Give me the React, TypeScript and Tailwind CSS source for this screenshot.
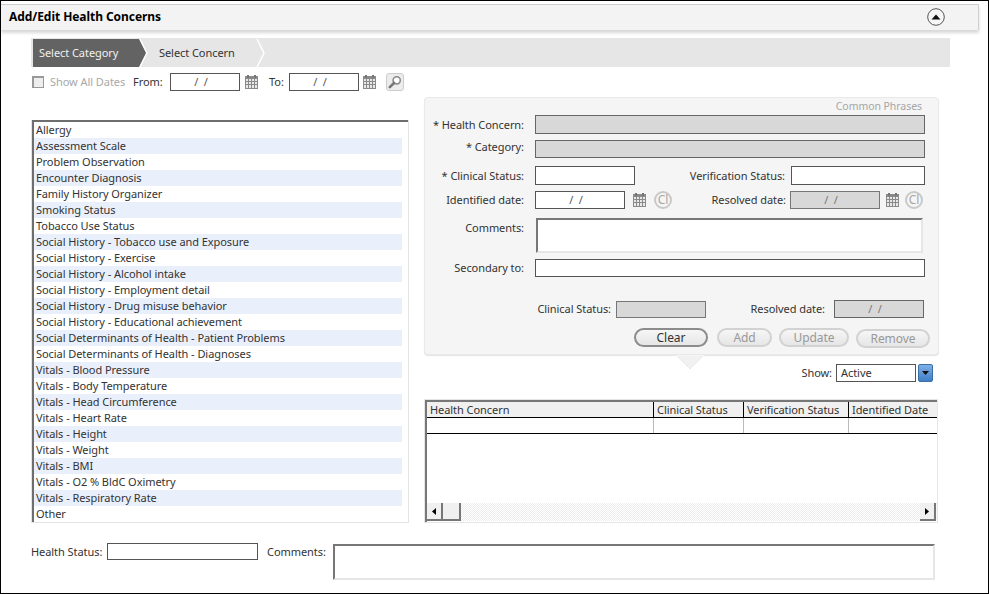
import React from "react";

const categories = [
  "Allergy",
  "Assessment Scale",
  "Problem Observation",
  "Encounter Diagnosis",
  "Family History Organizer",
  "Smoking Status",
  "Tobacco Use Status",
  "Social History - Tobacco use and Exposure",
  "Social History - Exercise",
  "Social History - Alcohol intake",
  "Social History - Employment detail",
  "Social History - Drug misuse behavior",
  "Social History - Educational achievement",
  "Social Determinants of Health - Patient Problems",
  "Social Determinants of Health - Diagnoses",
  "Vitals - Blood Pressure",
  "Vitals - Body Temperature",
  "Vitals - Head Circumference",
  "Vitals - Heart Rate",
  "Vitals - Height",
  "Vitals - Weight",
  "Vitals - BMI",
  "Vitals - O2 % BldC Oximetry",
  "Vitals - Respiratory Rate",
  "Other",
];

function CalendarIcon({ className }: { className?: string }) {
  return (
    <svg width="13" height="14" viewBox="0 0 13 14" className={className}>
      <rect x="0" y="1" width="13" height="13" fill="#8a8a8a" />
      <rect x="2" y="0" width="2" height="3" fill="#777" />
      <rect x="9" y="0" width="2" height="3" fill="#777" />
      <rect x="1" y="4" width="11" height="9" fill="#e8e8e8" />
      <path d="M3.5 4v9M6.5 4v9M9.5 4v9M1 6.5h11M1 9.5h11" stroke="#8a8a8a" strokeWidth="1" />
    </svg>
  );
}

function ClearDate({ className }: { className?: string }) {
  return (
    <div className={`w-[18px] h-[18px] shrink-0 rounded-full border-2 border-[#c9c9c9] flex items-center justify-center text-[12px] leading-none text-[#a6a6a6] ${className ?? ""}`}>
      Cl
    </div>
  );
}

function DateValue({ disabled }: { disabled?: boolean }) {
  return <span className={`whitespace-pre pr-[8px] ${disabled ? "text-[#777]" : "text-[#555]"}`}>{"/  /"}</span>;
}

function Pill({ label, disabled, className }: { label: string; disabled?: boolean; className: string }) {
  return (
    <button
      className={`h-[19px] rounded-full border-2 bg-gradient-to-b from-[#f6f6f6] to-[#e6e6e6] text-[12px] leading-none flex items-center justify-center ${
        disabled ? "border-[#d2d2d2] text-[#999]" : "border-[#8c8c8c] text-[#333]"
      } ${className}`}
    >
      {label}
    </button>
  );
}

function FormLabel({ children, className }: { children: React.ReactNode; className: string }) {
  return <label className={`text-right text-[#333] shrink-0 ${className}`}>{children}</label>;
}

export default function App() {
  return (
    <div className="w-[989px] h-[594px] overflow-hidden bg-white border-t border-l border-r border-b border-black flex flex-col text-[11px] leading-4 tracking-[-0.06px] text-[#333] font-['Noto_Sans','Open_Sans',sans-serif]">
      {/* title bar */}
      <div className="mt-[3px] w-[978px] h-[26px] shrink-0 bg-[#f3f3f3] border-t border-[#cfcfcf] border-r flex items-center justify-between pl-2 pr-[33px] pb-[2px] shadow-[0_3px_3px_#d8d8d8]">
        <h1 className="text-[12px] font-bold text-black">Add/Edit Health Concerns</h1>
        <svg width="18" height="18" viewBox="0 0 18 18">
          <circle cx="9" cy="9" r="8.3" fill="#f6f6f6" stroke="#555" strokeWidth="1" />
          <path d="M4.5 11.5 9 6.5l4.5 5z" fill="#111" />
        </svg>
      </div>

      <div className="pl-[30px] flex flex-col">
        {/* steps */}
        <div className="mt-[8px] w-[919px] h-[29px] bg-[#e6e6e6] pl-[2px] pt-[1px] flex">
          <div className="w-[106px] h-[28px] bg-[#636363] text-[#f0f0f0] pl-[6px] flex items-center">Select Category</div>
          <svg width="9" height="28" viewBox="0 0 9 28" className="shrink-0">
            <path d="M0 0 7 14 0 28z" fill="#636363" />
            <path d="M1 0 8 14 1 28" fill="none" stroke="#fff" strokeWidth="1.2" />
          </svg>
          <div className="w-[108px] h-[28px] pl-[11px] flex items-center">Select Concern</div>
          <svg width="9" height="28" viewBox="0 0 9 28" className="shrink-0">
            <path d="M1 0 8 14 1 28" fill="none" stroke="#fff" strokeWidth="1.5" />
          </svg>
        </div>

        {/* date filter */}
        <div className="mt-[6px] h-[18px] flex items-center">
          <span className="ml-[1px] w-[12px] h-[12px] shrink-0 border border-[#999] border-t-2 border-l-2 bg-[#eee]" />
          <span className="ml-[6px] w-[83px] shrink-0 text-[#a8a8a8]">Show All Dates</span>
          <span className="w-[37px]">From:</span>
          <div className="w-[70px] h-[18px] border border-[#555] text-center">
            <DateValue />
          </div>
          <CalendarIcon className="ml-[5px]" />
          <span className="ml-[11px] w-[20px]">To:</span>
          <div className="w-[70px] h-[18px] border border-[#555] text-center">
            <DateValue />
          </div>
          <CalendarIcon className="ml-[4px]" />
          <div className="ml-[10px] w-[18px] h-[18px] rounded-[3px] border border-[#ccc] bg-[#ececec] flex items-center justify-center">
            <svg width="14" height="14" viewBox="0 0 14 14">
              <circle cx="8.7" cy="5.3" r="3.6" fill="#fff" stroke="#8a8a8a" strokeWidth="1.6" />
              <path d="M6 8 1.8 12.2" stroke="#777" strokeWidth="2.6" strokeLinecap="round" />
            </svg>
          </div>
        </div>

        <div className="mt-[6px] flex">
          {/* category list */}
          <div className="mt-[23px] w-[378px] h-[403px] border-l border-r border-b border-[#e4e4e4] shrink-0">
            <ul className="w-full h-full border-t-2 border-l-2 border-[#6e6e6e] pr-[6px]">
              {categories.map((c, i) => (
                <li key={c} className={`h-4 pl-[2px] ${i % 2 === 1 ? "bg-[#eaf0fb]" : ""}`}>
                  {c}
                </li>
              ))}
            </ul>
          </div>

          <div className="ml-[15px] w-[516px] flex flex-col">
            {/* concern form */}
            <div className="relative h-[258px] w-[515px] bg-[#f5f5f5] border border-[#e9e9e9] rounded-[4px] shadow-[0_1px_1px_#e4e4e4]">
              <div className="h-[17px] pr-[16px] text-right text-[10.5px] text-[#a6a6a6]">Common Phrases</div>

              <div className="flex items-center h-[19px]">
                <FormLabel className="w-[99px]">* Health Concern:</FormLabel>
                <div className="ml-[11px] w-[390px] h-[19px] bg-[#d8d8d8] border border-[#666]" />
              </div>
              <div className="mt-[6px] flex items-center h-[18px]">
                <FormLabel className="w-[99px] pb-[4px]">* Category:</FormLabel>
                <div className="ml-[11px] w-[390px] h-[18px] bg-[#d8d8d8] border border-[#666]" />
              </div>
              <div className="mt-[8px] flex items-center h-[19px]">
                <FormLabel className="w-[99px]">* Clinical Status:</FormLabel>
                <div className="ml-[11px] w-[100px] h-[19px] bg-white border border-[#555]" />
                <FormLabel className="w-[150px]">Verification Status:</FormLabel>
                <div className="ml-[6px] w-[134px] h-[19px] bg-white border border-[#555]" />
              </div>
              <div className="mt-[6px] flex items-center h-[18px]">
                <FormLabel className="w-[99px]">Identified date:</FormLabel>
                <div className="ml-[11px] w-[90px] h-[18px] bg-white border border-[#555] text-center">
                  <DateValue />
                </div>
                <CalendarIcon className="ml-[8px] shrink-0" />
                <ClearDate className="ml-[8px]" />
                <FormLabel className="w-[114px]">Resolved date:</FormLabel>
                <div className="ml-[4px] w-[90px] h-[18px] bg-[#d8d8d8] border border-[#777] text-center">
                  <DateValue disabled />
                </div>
                <CalendarIcon className="ml-[6px] shrink-0" />
                <ClearDate className="ml-[6px]" />
              </div>
              <div className="mt-[9px] flex h-[35px]">
                <FormLabel className="w-[99px] pt-[2px]">Comments:</FormLabel>
                <div className="ml-[12px] w-[387px] h-[35px] bg-white border-2 border-t-[#777] border-l-[#777] border-r-[#e6e6e6] border-b-[#e6e6e6]" />
              </div>
              <div className="mt-[6px] flex items-center h-[18px]">
                <FormLabel className="w-[99px]">Secondary to:</FormLabel>
                <div className="ml-[11px] w-[390px] h-[18px] bg-white border border-[#555]" />
              </div>
              <div className="mt-[23px] flex items-center h-[18px]">
                <FormLabel className="w-[186px]">Clinical Status:</FormLabel>
                <div className="ml-[5px] w-[90px] h-[17px] bg-[#d8d8d8] border border-[#777]" />
                <FormLabel className="w-[119px]">Resolved date:</FormLabel>
                <div className="ml-[9px] w-[90px] h-[18px] bg-[#d8d8d8] border border-[#666] text-center">
                  <DateValue disabled />
                </div>
              </div>
              <div className="mt-[10px] flex items-start">
                <Pill label="Clear" className="ml-[209px] w-[74px]" />
                <Pill label="Add" disabled className="ml-[9px] w-[55px]" />
                <Pill label="Update" disabled className="ml-[7px] w-[70px]" />
                <Pill label="Remove" disabled className="ml-[7px] mt-[1px] w-[74px]" />
              </div>
              {/* callout tip */}
              <svg width="28" height="15" viewBox="0 0 28 15" className="absolute left-[251px] top-[257px]">
                <path d="M0 0 14 14 28 0z" fill="#f1f1f1" stroke="#e9e9e9" strokeWidth="1" />
                <path d="M0 0h28" stroke="#f5f5f5" strokeWidth="2" />
              </svg>
            </div>

            {/* status filter */}
            <div className="mt-[9px] h-[18px] flex items-center justify-end pr-[7px]">
              <span>Show:</span>
              <div className="ml-[4px] w-[80px] h-[18px] border border-[#555] pl-[4px] text-[#333]">Active</div>
              <div className="ml-[2px] w-[15px] h-[18px] rounded-[2px] border border-[#3b6ea8] bg-gradient-to-b from-[#7fb0e6] to-[#3f7fc6] flex items-center justify-center">
                <svg width="7" height="4" viewBox="0 0 7 4">
                  <path d="M0 0h7L3.5 4z" fill="#111" />
                </svg>
              </div>
            </div>

            {/* concerns table */}
            <div className="mt-[17px] w-[514px] h-[124px] border border-[#e6e6e6]">
              <div className="relative w-full h-full border-t-2 border-l-2 border-[#777] flex flex-col">
                <div className="flex h-[16px] bg-[#f0f0f0] border-b border-black">
                  <div className="w-[227px] pl-[3px] border-r border-black">Health Concern</div>
                  <div className="w-[90px] pl-[3px] border-r border-black">Clinical Status</div>
                  <div className="w-[105px] pl-[3px] border-r border-black">Verification Status</div>
                  <div className="flex-1 pl-[3px]">Identified Date</div>
                </div>
                <div className="flex h-[16px] border-b border-black">
                  <div className="w-[227px] border-r border-[#bbb]" />
                  <div className="w-[90px] border-r border-[#bbb]" />
                  <div className="w-[105px] border-r border-[#bbb]" />
                </div>
                <div className="flex-1" />
                <div className="h-[18px] mb-[1px] flex bg-[repeating-conic-gradient(#eeeeee_0_25%,#fff_0_50%)] bg-[length:2px_2px]">
                  <div className="w-[16px] bg-[#f0f0f0] border-r-2 border-b-2 border-[#777] flex items-center justify-center">
                    <svg width="4" height="7" viewBox="0 0 4 7">
                      <path d="M4 0v7L0 3.5z" fill="#000" />
                    </svg>
                  </div>
                  <div className="w-[18px] bg-[#f0f0f0] border-r-2 border-b-2 border-[#777]" />
                  <div className="flex-1" />
                  <div className="w-[16px] mr-[1px] bg-[#f0f0f0] border-r-2 border-b-2 border-[#777] flex items-center justify-center">
                    <svg width="4" height="7" viewBox="0 0 4 7">
                      <path d="M0 0v7l4-3.5z" fill="#000" />
                    </svg>
                  </div>
                </div>
              </div>
            </div>
          </div>
        </div>

        {/* health status */}
        <div className="mt-[20px] flex items-start">
          <span className="w-[76px] shrink-0 leading-[17px]">Health Status:</span>
          <div className="w-[151px] h-[17px] border border-[#555]" />
          <span className="ml-[9px] w-[66px] shrink-0 leading-[17px]">Comments:</span>
          <div className="mt-[1px] w-[602px] h-[36px] border-2 border-t-[#777] border-l-[#777] border-r-[#e6e6e6] border-b-[#e6e6e6]" />
        </div>
      </div>
    </div>
  );
}
